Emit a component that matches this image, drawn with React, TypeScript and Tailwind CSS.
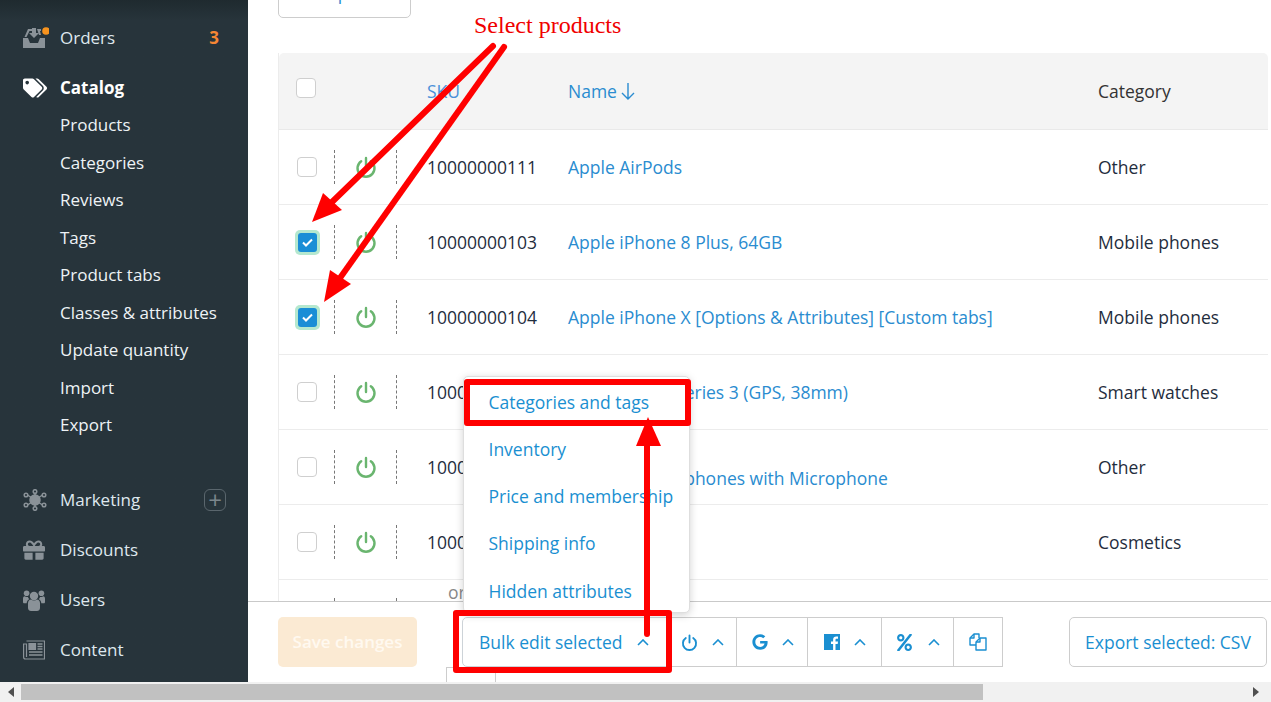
import React from 'react';
import { FaTags, FaGift, FaGoogle, FaPercent } from 'react-icons/fa';

const OrdersIcon = () => (
  <svg width="26" height="22" viewBox="0 0 26 22" fill="#8a9298">
    <path d="M0 11h5l2 5h8l2-5h5v10H0z" />
    <path d="M5 2h4v2H6.500L3.500 10H1.500zM14 2h4v2h-1l1 4h-2z" />
    <path d="M9 1h4v5h3l-5 5-5-5h3z" />
    <circle cx="23" cy="4" r="3.800" fill="#f7931e" />
  </svg>
);

const MarketingIcon = () => (
  <svg width="24" height="22" viewBox="0 0 24 22" fill="none" stroke="#8a9298" strokeWidth="1.500">
    <path d="M12 11 3 5M12 11l9-6M12 11l-9 6M12 11l9 6M12 11V2M12 11v9" />
    <circle cx="12" cy="11" r="5" fill="#8a9298" />
    <circle cx="12" cy="2.500" r="1.800" fill="#27343b" />
    <circle cx="12" cy="19.500" r="1.800" fill="#27343b" />
    <circle cx="3" cy="6" r="1.800" fill="#27343b" />
    <circle cx="21" cy="6" r="1.800" fill="#27343b" />
    <circle cx="3" cy="16" r="1.800" fill="#27343b" />
    <circle cx="21" cy="16" r="1.800" fill="#27343b" />
  </svg>
);

const UsersIcon = () => (
  <svg width="22" height="21" viewBox="0 0 22 21" fill="#8a9298">
    <circle cx="11" cy="6" r="4.200" />
    <circle cx="3.600" cy="3.200" r="2.800" />
    <circle cx="18.400" cy="3.200" r="2.800" />
    <path d="M5 13c0-2.500 2-3.500 3-3.500.8.700 1.800 1 3 1s2.200-.3 3-1c1 0 3 1 3 3.500v5c0 2-1.500 3-3 3H8c-1.500 0-3-1-3-3z" />
    <path d="M0 8.500C0 7 1 6.300 1.700 6.300c.6.500 1.200.7 2 .7h1.200c.3 1 .8 1.700 1.500 2.300-1.600.6-2.700 2.100-2.700 4H1.200C.5 13.300 0 12.700 0 12zM22 8.500C22 7 21 6.300 20.300 6.300c-.6.500-1.200.7-2 .7h-1.200c-.3 1-.8 1.700-1.500 2.300 1.600.6 2.700 2.100 2.700 4h2.500c.7 0 1.200-.6 1.200-1.300z" />
  </svg>
);

const NewsIcon = () => (
  <svg width="22" height="20" viewBox="0 0 22 20" fill="none" stroke="#8a9298" strokeWidth="1.200">
    <path d="M3.500 1h18v18H2.500C1.300 19 .6 18.200.6 17V4h2.900v13" />
    <path d="M6 3.500h6.500v6H6z" fill="#8a9298" />
    <path d="M14.500 4h5M14.500 6.500h5M14.500 9h5M6 12h13.500M6 15h13.500" strokeWidth="1.500" />
  </svg>
);

const PowerIcon = ({ color, size = 22 }: { color: string; size?: number }) => (
  <svg width={size} height={size} viewBox="0 0 22 22" fill="none" stroke={color} strokeWidth="2.400" strokeLinecap="round">
    <path d="M6.200 5.200a8.500 8.500 0 1 0 9.600 0" />
    <path d="M11 2v9" />
  </svg>
);

const Caret = () => (
  <svg width="12" height="7" viewBox="0 0 12 7" fill="none" stroke="#1a8fd1" strokeWidth="1.600">
    <path d="M1 6l5-5 5 5" />
  </svg>
);

const FacebookIcon = () => (
  <svg width="16" height="16" viewBox="0 0 16 16">
    <path fill="#1a8fd1" d="M0 0h16v16h-4.500v-6h2.200l.3-2.500h-2.500V6c0-.8.3-1.200 1.200-1.200H14V2.600c-.4-.1-1-.1-1.700-.1-1.900 0-3.200 1.100-3.200 3.200v1.800H7V10h2.100v6H0z" />
  </svg>
);

const CopyIcon = () => (
  <svg width="18" height="18" viewBox="0 0 18 18" fill="none" stroke="#1a8fd1" strokeWidth="1.400" strokeLinejoin="round">
    <path d="M7 12H1V5l4-4h5v4" />
    <path d="M5 1v4H1" />
    <path d="M7 9l4-4h6v12H7z" fill="#fff" />
    <path d="M11 5v4H7" />
  </svg>
);

const Checkbox = ({ checked }: { checked?: boolean }) =>
  checked ? (
    <div className="w-[25px] h-[25px] -ml-[2px] rounded-[5px] bg-[#b5e8cf] flex items-center justify-center">
      <div className="w-[19px] h-[19px] rounded-[3px] bg-[#1a8ed6] flex items-center justify-center">
        <svg width="11" height="9" viewBox="0 0 11 9" fill="none" stroke="#fff" strokeWidth="2">
          <path d="M1 4.500l3 3 6-6" />
        </svg>
      </div>
    </div>
  ) : (
    <div className="w-[20px] h-[20px] rounded-[4px] border border-[#cfcfcf] bg-white" />
  );

const navSub = ['Products', 'Categories', 'Reviews', 'Tags', 'Product tabs', 'Classes & attributes', 'Update quantity', 'Import', 'Export'];

const rows = [
  { sku: '10000000111', name: 'Apple AirPods', category: 'Other' },
  { sku: '10000000103', name: 'Apple iPhone 8 Plus, 64GB', category: 'Mobile phones', checked: true },
  { sku: '10000000104', name: 'Apple iPhone X [Options & Attributes] [Custom tabs]', category: 'Mobile phones', checked: true },
  { sku: '10000000105', name: 'Apple Watch Series 3 (GPS, 38mm)', category: 'Smart watches' },
  { sku: '10000000106', name: 'Apple', name2: 'Wireless Headphones with Microphone', category: 'Other' },
  { sku: '10000000107', name: 'Argan Oil', category: 'Cosmetics' },
];

const menuItems = ['Categories and tags', 'Inventory', 'Price and membership', 'Shipping info', 'Hidden attributes'];

const NavRow = ({ icon, label, right, className }: { icon: React.ReactNode; label: string; right?: React.ReactNode; className?: string }) => (
  <div className={`flex items-center h-[36px] pl-[23px] pr-[22px] ${className ?? ''}`}>
    <div className="w-[37px] shrink-0 flex items-center">{icon}</div>
    <span className="flex-1">{label}</span>
    {right}
  </div>
);

const Sidebar = () => (
  <div className="w-[248px] shrink-0 h-full bg-gradient-to-b from-[#1f2a2f] to-[#27343b] to-[3%] text-[#dfe8ee] text-[17px] pt-[20px]">
    <NavRow
      icon={<OrdersIcon />}
      label="Orders"
      right={<span className="font-bold text-[#f58634] pr-[7px]">3</span>}
    />
    <NavRow icon={<FaTags size={24} color="#fff" />} label="Catalog" className="mt-[14px] font-bold text-white" />
    <div className="pl-[60px] text-[#eef3f6]">
      {navSub.map((item) => (
        <div key={item} className="h-[37.5px] flex items-center">{item}</div>
      ))}
    </div>
    <NavRow
      icon={<MarketingIcon />}
      label="Marketing"
      className="mt-[38.5px]"
      right={
        <div className="w-[22px] h-[22px] rounded-[6px] border border-[#5a666d] flex items-center justify-center text-[#7b868c] text-[24px] leading-none">+</div>
      }
    />
    <NavRow icon={<FaGift size={22} color="#8a9298" />} label="Discounts" className="mt-[14px]" />
    <NavRow icon={<UsersIcon />} label="Users" className="mt-[14px]" />
    <NavRow icon={<NewsIcon />} label="Content" className="mt-[14px]" />
  </div>
);

const ProductRow = ({ row }: { row: (typeof rows)[number] }) => (
  <div className="flex items-center h-[75px] border-b border-[#ececec] text-[#1f2d3d]">
    <div className="w-[55px] pl-[18px] shrink-0 flex items-center">
      <Checkbox checked={row.checked} />
    </div>
    <div className="w-[63px] h-[34px] shrink-0 flex items-center justify-center border-x border-dashed border-[#777]">
      <PowerIcon color="#6ab56f" />
    </div>
    <div className="w-[171px] pl-[30px] shrink-0">{row.sku}</div>
    <div className="w-[530px] shrink-0 text-[#2a8cd0] leading-[23px]">
      <div>{row.name}</div>
      {row.name2 && <div>{row.name2}</div>}
    </div>
    <div className="flex-1">{row.category}</div>
  </div>
);

const Toolbar = () => (
  <div className="relative h-[81px] shrink-0 bg-white border-t border-[#c9c9c9] flex items-start pl-[30px] pt-[15px]">
    <div className="w-[139px] h-[50px] rounded-[5px] bg-[#fbead3] text-[#fff9f0] text-[17px] font-semibold flex items-center justify-center">
      Save changes
    </div>
    <div className="ml-[45px] w-[208px] h-[50px] border border-[#cdd3d8] rounded-l-[5px] flex items-center pl-[16px] gap-[14px] text-[#1a8fd1]">
      Bulk edit selected
      <Caret />
    </div>
    <div className="h-[50px] w-[67px] border-y border-r border-[#cdcdcd] flex items-center justify-center gap-[14px] pr-[2px]">
      <PowerIcon color="#1a8fd1" size={17} />
      <Caret />
    </div>
    <div className="h-[50px] w-[71px] border-y border-r border-[#cdcdcd] flex items-center justify-center gap-[14px] pl-[2px]">
      <FaGoogle size={16} color="#1a8fd1" />
      <Caret />
    </div>
    <div className="h-[50px] w-[74px] border-y border-r border-[#cdcdcd] flex items-center justify-center gap-[14px] pl-[1px]">
      <FacebookIcon />
      <Caret />
    </div>
    <div className="h-[50px] w-[72px] border-y border-r border-[#cdcdcd] flex items-center justify-center gap-[15px]">
      <FaPercent size={17} color="#1a8fd1" />
      <Caret />
    </div>
    <div className="h-[50px] w-[49px] border-y border-r border-[#cdcdcd] flex items-center justify-center">
      <CopyIcon />
    </div>
    <div className="ml-[66px] w-[198px] h-[50px] border border-[#cdcdcd] rounded-[5px] flex items-center justify-center text-[#1a8fd1]">
      Export selected: CSV
    </div>
    <div className="absolute left-[198px] top-[65px] w-[50px] h-[15px] border-x border-t border-[#cdcdcd] bg-white" />
  </div>
);

const BulkMenu = () => (
  <div className="absolute left-[215px] top-[376px] w-[227px] h-[237px] bg-white border border-[#dedede] rounded-[5px] shadow-[0_2px_8px_rgba(0,0,0,0.18)] pt-[1px] text-[#1a8fd1]">
    {menuItems.map((item) => (
      <div key={item} className="h-[47.3px] pl-[24.500px] flex items-center">{item}</div>
    ))}
  </div>
);

const Annotations = () => (
  <>
    <svg className="absolute left-0 top-0 pointer-events-none" width="1271" height="702" viewBox="0 0 1271 702" fill="none">
      <g stroke="#ff0000" strokeWidth="6" strokeLinecap="round">
        <path d="M493 46 332 202" />
        <path d="M504 47 340 278" />
        <path d="M647 634V440" />
      </g>
      <g fill="#ff0000">
        <path d="M312 222 323 193 342 210z" />
        <path d="M324 302 330 270 351 284z" />
        <path d="M648 417 636 446H661z" />
      </g>
      <g stroke="#ff0000" strokeWidth="6" strokeLinejoin="round">
        <rect x="467" y="382" width="221" height="41" />
        <rect x="456" y="613" width="213" height="57" />
      </g>
    </svg>
    <div className="absolute left-[474px] top-[11px] text-[24px] leading-[28px] text-[#f00000] font-['Liberation_Serif',serif]">
      Select products
    </div>
  </>
);

export default function App() {
  return (
    <div className="relative w-[1271px] h-[702px] overflow-hidden bg-white text-[17.5px] font-['Open_Sans',sans-serif] flex flex-col">
      <div className="flex h-[682px]">
        <Sidebar />
        <div className="relative flex-1 min-w-0 flex flex-col">
          <div className="flex-1 min-h-0 overflow-hidden pl-[30px]">
            <div className="w-[133px] h-[50px] -mt-[32px] border border-[#cdcdcd] rounded-[5px] flex items-center justify-center text-[#2a8cd0]">
              Import
            </div>
            <div className="mt-[35px] w-[990px] border-l border-[#ececec]">
              <div className="flex items-center h-[77px] bg-[#f4f4f4] border-b border-[#e9e9e9] rounded-t-[5px]">
                <div className="w-[55px] pl-[17px] shrink-0 -mt-[7px]">
                  <Checkbox />
                </div>
                <div className="w-[234px] pl-[93px] shrink-0 text-[#4a90d9]">SKU</div>
                <div className="w-[530px] shrink-0 text-[#2a8cd0] flex items-center gap-[2px]">
                  Name
                  <svg width="18" height="20" viewBox="0 0 18 20" fill="none" stroke="#2a8cd0" strokeWidth="1.400">
                    <path d="M9 2v16M3 12l6 6 6-6" />
                  </svg>
                </div>
                <div className="flex-1 text-[#333]">Category</div>
              </div>
              {rows.map((row) => (
                <ProductRow key={row.sku} row={row} />
              ))}
              <div className="flex items-start h-[40px]">
                <div className="w-[55px] shrink-0" />
                <div className="w-[63px] h-[34px] mt-[18px] shrink-0 border-x border-dashed border-[#777]" />
                <div className="pl-[51px] text-[#888] -mt-[1px]">or</div>
              </div>
            </div>
          </div>
          <Toolbar />
          <BulkMenu />
        </div>
      </div>
      <div className="h-[20px] bg-[#f1f1f1] flex items-center justify-between shrink-0 relative pl-[7px] pr-[11px]">
        <svg width="7" height="10" viewBox="0 0 7 10" fill="#505050"><path d="M7 0v10L1 5z" /></svg>
        <div className="absolute left-[21px] top-[2px] w-[962px] h-[16px] bg-[#c1c1c1]" />
        <svg width="7" height="10" viewBox="0 0 7 10" fill="#505050"><path d="M0 0v10l6-5z" /></svg>
      </div>
      <Annotations />
    </div>
  );
}
